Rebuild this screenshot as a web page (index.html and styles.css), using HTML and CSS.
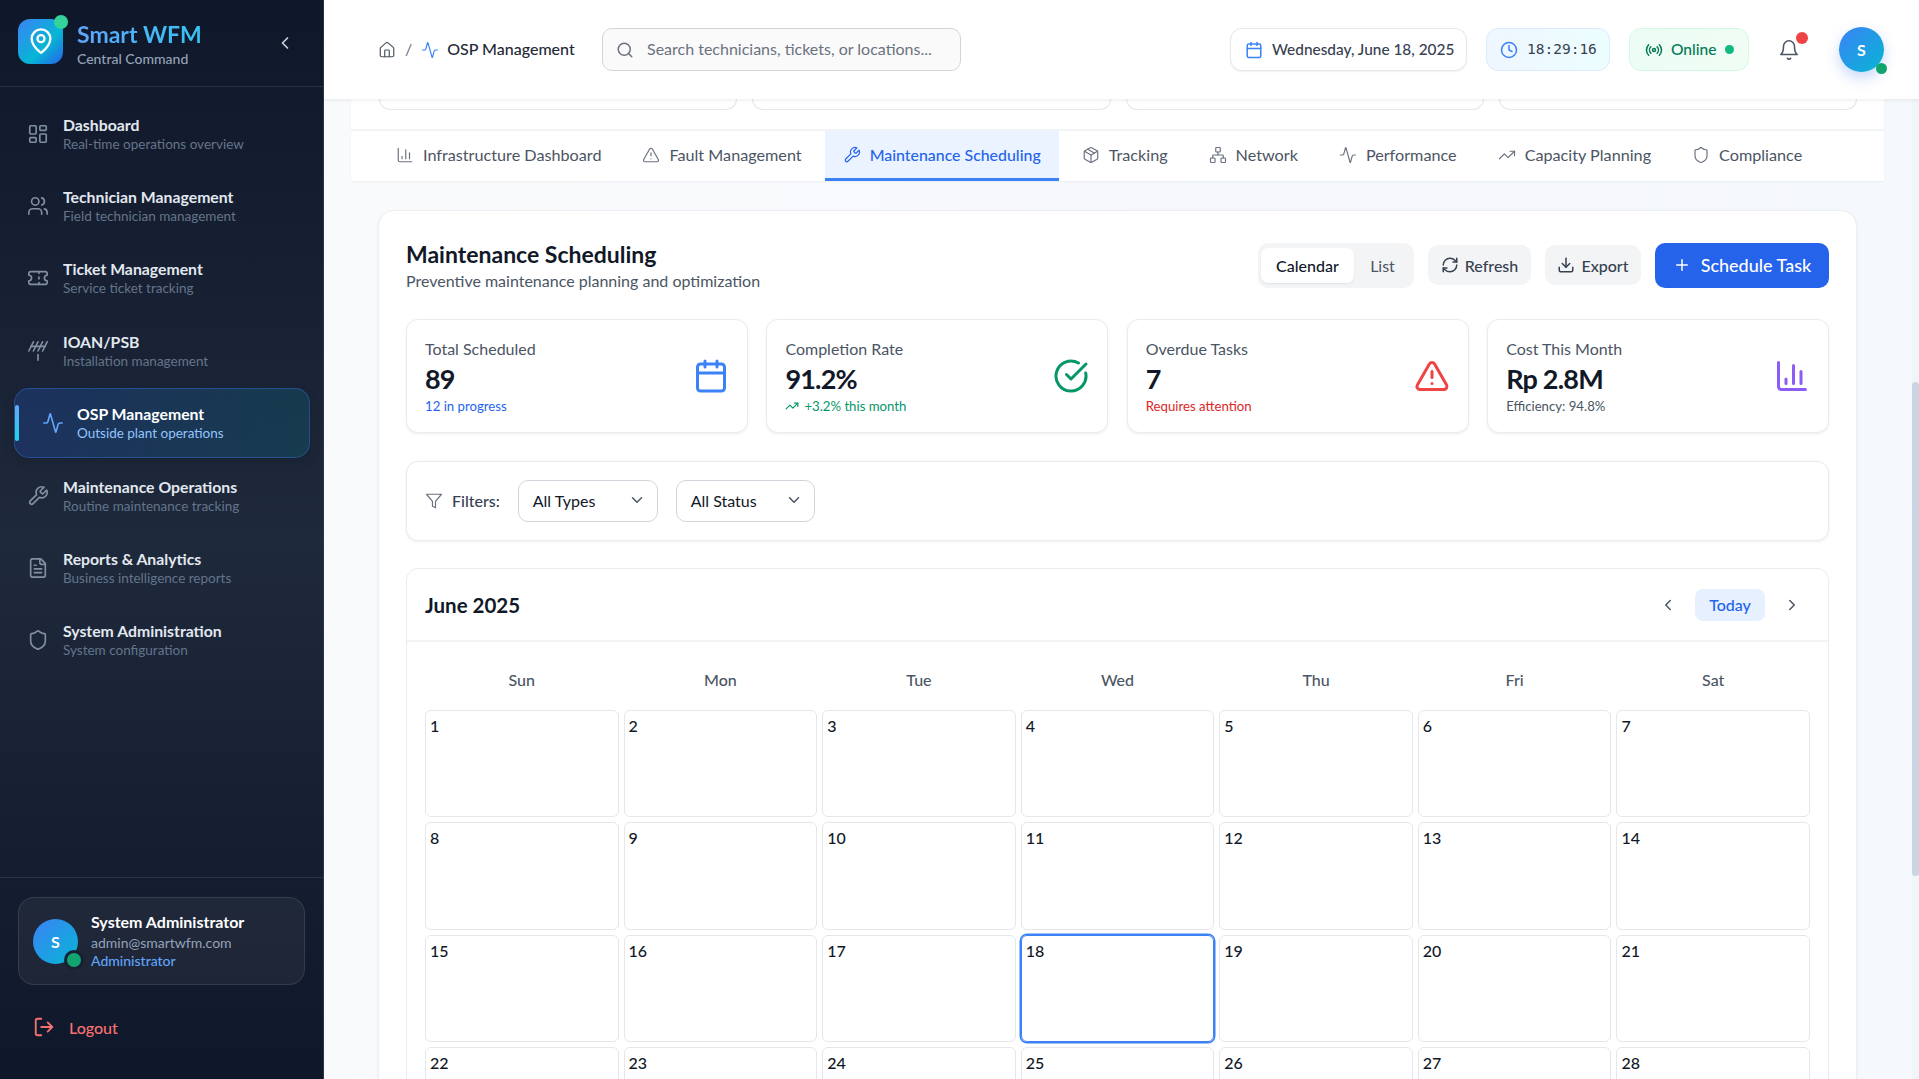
FILE: index.html
```html
<!DOCTYPE html>
<html lang="en">
<head>
    <meta charset="UTF-8">
    <meta name="viewport" content="width=device-width, initial-scale=1.0">
    <title>Smart WFM - OSP Management</title>
    <link rel="stylesheet" href="styles.css">
</head>
<body>
    <!-- icon sprite -->
    <svg class="sprite" xmlns="http://www.w3.org/2000/svg">
        <symbol id="i-pin" viewBox="0 0 24 24"><path d="M20 10c0 4.993-5.539 10.193-7.399 11.799a1 1 0 0 1-1.202 0C9.539 20.193 4 14.993 4 10a8 8 0 0 1 16 0"/><circle cx="12" cy="10" r="3"/></symbol>
        <symbol id="i-left" viewBox="0 0 24 24"><path d="m15 18-6-6 6-6"/></symbol>
        <symbol id="i-right" viewBox="0 0 24 24"><path d="m9 18 6-6-6-6"/></symbol>
        <symbol id="i-down" viewBox="0 0 24 24"><path d="m6 9 6 6 6-6"/></symbol>
        <symbol id="i-dash" viewBox="0 0 24 24"><rect x="3" y="3" width="7" height="9" rx="1"/><rect x="14" y="3" width="7" height="5" rx="1"/><rect x="14" y="12" width="7" height="9" rx="1"/><rect x="3" y="16" width="7" height="5" rx="1"/></symbol>
        <symbol id="i-users" viewBox="0 0 24 24"><path d="M16 21v-2a4 4 0 0 0-4-4H6a4 4 0 0 0-4 4v2"/><circle cx="9" cy="7" r="4"/><path d="M22 21v-2a4 4 0 0 0-3-3.87"/><path d="M16 3.13a4 4 0 0 1 0 7.75"/></symbol>
        <symbol id="i-ticket" viewBox="0 0 24 24"><path d="M2 9a3 3 0 0 1 0 6v2a2 2 0 0 0 2 2h16a2 2 0 0 0 2-2v-2a3 3 0 0 1 0-6V7a2 2 0 0 0-2-2H4a2 2 0 0 0-2 2Z"/><path d="M13 5v2"/><path d="M13 17v2"/><path d="M13 11v2"/></symbol>
        <symbol id="i-antenna" viewBox="0 0 24 24"><path d="M2 12 7 2"/><path d="m7 12 5-10"/><path d="m12 12 5-10"/><path d="m17 12 5-10"/><path d="M4.5 7h15"/><path d="M12 16v6"/></symbol>
        <symbol id="i-activity" viewBox="0 0 24 24"><path d="M22 12h-2.48a2 2 0 0 0-1.93 1.46l-2.35 8.36a.25.25 0 0 1-.48 0L9.24 2.18a.25.25 0 0 0-.48 0l-2.35 8.36A2 2 0 0 1 4.49 12H2"/></symbol>
        <symbol id="i-wrench" viewBox="0 0 24 24"><path d="M14.7 6.3a1 1 0 0 0 0 1.4l1.6 1.6a1 1 0 0 0 1.4 0l3.77-3.77a6 6 0 0 1-7.94 7.94l-6.91 6.91a2.12 2.12 0 0 1-3-3l6.91-6.91a6 6 0 0 1 7.94-7.94l-3.76 3.76z"/></symbol>
        <symbol id="i-file" viewBox="0 0 24 24"><path d="M15 2H6a2 2 0 0 0-2 2v16a2 2 0 0 0 2 2h12a2 2 0 0 0 2-2V7Z"/><path d="M14 2v4a2 2 0 0 0 2 2h4"/><path d="M10 9H8"/><path d="M16 13H8"/><path d="M16 17H8"/></symbol>
        <symbol id="i-shield" viewBox="0 0 24 24"><path d="M20 13c0 5-3.5 7.5-7.66 8.95a1 1 0 0 1-.67-.01C7.5 20.5 4 18 4 13V6a1 1 0 0 1 1-1c2 0 4.5-1.2 6.24-2.72a1.17 1.17 0 0 1 1.52 0C14.51 3.81 17 5 19 5a1 1 0 0 1 1 1z"/></symbol>
        <symbol id="i-logout" viewBox="0 0 24 24"><path d="M9 21H5a2 2 0 0 1-2-2V5a2 2 0 0 1 2-2h4"/><path d="m16 17 5-5-5-5"/><path d="M21 12H9"/></symbol>
        <symbol id="i-home" viewBox="0 0 24 24"><path d="M15 21v-8a1 1 0 0 0-1-1h-4a1 1 0 0 0-1 1v8"/><path d="M3 10a2 2 0 0 1 .709-1.528l7-5.999a2 2 0 0 1 2.582 0l7 5.999A2 2 0 0 1 21 10v9a2 2 0 0 1-2 2H5a2 2 0 0 1-2-2z"/></symbol>
        <symbol id="i-search" viewBox="0 0 24 24"><circle cx="11" cy="11" r="8"/><path d="m21 21-4.3-4.3"/></symbol>
        <symbol id="i-calendar" viewBox="0 0 24 24"><path d="M8 2v4"/><path d="M16 2v4"/><rect x="3" y="4" width="18" height="18" rx="2"/><path d="M3 10h18"/></symbol>
        <symbol id="i-clock" viewBox="0 0 24 24"><circle cx="12" cy="12" r="10"/><polyline points="12 6 12 12 16 14"/></symbol>
        <symbol id="i-radio" viewBox="0 0 24 24"><path d="M4.9 19.1C1 15.2 1 8.8 4.9 4.9"/><path d="M7.8 16.2c-2.3-2.3-2.3-6.1 0-8.5"/><circle cx="12" cy="12" r="2"/><path d="M16.2 7.8c2.3 2.3 2.3 6.1 0 8.5"/><path d="M19.1 4.9C23 8.8 23 15.1 19.1 19"/></symbol>
        <symbol id="i-bell" viewBox="0 0 24 24"><path d="M6 8a6 6 0 0 1 12 0c0 7 3 9 3 9H3s3-2 3-9"/><path d="M10.3 21a1.94 1.94 0 0 0 3.4 0"/></symbol>
        <symbol id="i-chart" viewBox="0 0 24 24"><path d="M3 3v16a2 2 0 0 0 2 2h16"/><path d="M18 17V9"/><path d="M13 17V5"/><path d="M8 17v-3"/></symbol>
        <symbol id="i-alert" viewBox="0 0 24 24"><path d="m21.73 18-8-14a2 2 0 0 0-3.48 0l-8 14A2 2 0 0 0 4 21h16a2 2 0 0 0 1.73-3"/><path d="M12 9v4"/><path d="M12 17h.01"/></symbol>
        <symbol id="i-package" viewBox="0 0 24 24"><path d="m7.5 4.27 9 5.15"/><path d="M21 8a2 2 0 0 0-1-1.73l-7-4a2 2 0 0 0-2 0l-7 4A2 2 0 0 0 3 8v8a2 2 0 0 0 1 1.73l7 4a2 2 0 0 0 2 0l7-4A2 2 0 0 0 21 16Z"/><path d="m3.3 7 8.7 5 8.7-5"/><path d="M12 22V12"/></symbol>
        <symbol id="i-network" viewBox="0 0 24 24"><rect x="16" y="16" width="6" height="6" rx="1"/><rect x="2" y="16" width="6" height="6" rx="1"/><rect x="9" y="2" width="6" height="6" rx="1"/><path d="M5 16v-3a1 1 0 0 1 1-1h12a1 1 0 0 1 1 1v3"/><path d="M12 12V8"/></symbol>
        <symbol id="i-trend" viewBox="0 0 24 24"><polyline points="22 7 13.5 15.5 8.5 10.5 2 17"/><polyline points="16 7 22 7 22 13"/></symbol>
        <symbol id="i-refresh" viewBox="0 0 24 24"><path d="M3 12a9 9 0 0 1 9-9 9.75 9.75 0 0 1 6.74 2.74L21 8"/><path d="M21 3v5h-5"/><path d="M21 12a9 9 0 0 1-9 9 9.75 9.75 0 0 1-6.74-2.74L3 16"/><path d="M8 16H3v5"/></symbol>
        <symbol id="i-download" viewBox="0 0 24 24"><path d="M21 15v4a2 2 0 0 1-2 2H5a2 2 0 0 1-2-2v-4"/><polyline points="7 10 12 15 17 10"/><line x1="12" y1="15" x2="12" y2="3"/></symbol>
        <symbol id="i-plus" viewBox="0 0 24 24"><path d="M5 12h14"/><path d="M12 5v14"/></symbol>
        <symbol id="i-check" viewBox="0 0 24 24"><path d="M21.801 10A10 10 0 1 1 17 3.335"/><path d="m9 11 3 3L22 4"/></symbol>
        <symbol id="i-filter" viewBox="0 0 24 24"><polygon points="22 3 2 3 10 12.46 10 19 14 21 14 12.46 22 3"/></symbol>
    </svg>

    <div class="app">
        <!-- sidebar -->
        <aside class="sidebar">
            <div class="brand">
                <div class="logo">
                    <svg class="icon"><use href="#i-pin"/></svg>
                    <span class="logo-dot"></span>
                </div>
                <div class="brand-text">
                    <div class="brand-name">Smart WFM</div>
                    <div class="brand-sub">Central Command</div>
                </div>
                <svg class="icon brand-toggle"><use href="#i-left"/></svg>
            </div>

            <nav class="nav">
                <a class="nav-item"><svg class="icon"><use href="#i-dash"/></svg><span><b>Dashboard</b><small>Real-time operations overview</small></span></a>
                <a class="nav-item"><svg class="icon"><use href="#i-users"/></svg><span><b>Technician Management</b><small>Field technician management</small></span></a>
                <a class="nav-item"><svg class="icon"><use href="#i-ticket"/></svg><span><b>Ticket Management</b><small>Service ticket tracking</small></span></a>
                <a class="nav-item"><svg class="icon"><use href="#i-antenna"/></svg><span><b>IOAN/PSB</b><small>Installation management</small></span></a>
                <a class="nav-item active"><svg class="icon"><use href="#i-activity"/></svg><span><b>OSP Management</b><small>Outside plant operations</small></span></a>
                <a class="nav-item"><svg class="icon"><use href="#i-wrench"/></svg><span><b>Maintenance Operations</b><small>Routine maintenance tracking</small></span></a>
                <a class="nav-item"><svg class="icon"><use href="#i-file"/></svg><span><b>Reports &amp; Analytics</b><small>Business intelligence reports</small></span></a>
                <a class="nav-item"><svg class="icon"><use href="#i-shield"/></svg><span><b>System Administration</b><small>System configuration</small></span></a>
            </nav>

            <div class="side-footer">
                <div class="user-card">
                    <div class="avatar">S<span class="user-dot"></span></div>
                    <div class="user-text">
                        <div class="user-name">System Administrator</div>
                        <div class="user-mail">admin@smartwfm.com</div>
                        <div class="user-role">Administrator</div>
                    </div>
                </div>
                <a class="logout"><svg class="icon"><use href="#i-logout"/></svg>Logout</a>
            </div>
        </aside>

        <main class="main">
            <!-- top bar -->
            <header class="topbar">
                <div class="crumbs">
                    <svg class="icon crumb-home"><use href="#i-home"/></svg>
                    <span class="crumb-sep">/</span>
                    <svg class="icon crumb-page"><use href="#i-activity"/></svg>
                    <span class="crumb-name">OSP Management</span>
                </div>
                <div class="search">
                    <svg class="icon"><use href="#i-search"/></svg>
                    <span>Search technicians, tickets, or locations...</span>
                </div>
                <div class="top-right">
                    <div class="pill pill-date"><svg class="icon"><use href="#i-calendar"/></svg><span>Wednesday, June 18, 2025</span></div>
                    <div class="pill pill-time"><svg class="icon"><use href="#i-clock"/></svg><span>18:29:16</span></div>
                    <div class="pill pill-online"><svg class="icon"><use href="#i-radio"/></svg><span>Online</span><span class="online-dot"></span></div>
                    <div class="bell"><svg class="icon"><use href="#i-bell"/></svg><span class="bell-dot"></span></div>
                    <div class="avatar avatar-top">S<span class="top-dot"></span></div>
                </div>
            </header>

            <div class="content">
                <div class="panel">
                    <div class="stubs"><div></div><div></div><div></div><div></div></div>
                    <div class="tabs">
                        <a class="tab"><svg class="icon"><use href="#i-chart"/></svg>Infrastructure Dashboard</a>
                        <a class="tab"><svg class="icon"><use href="#i-alert"/></svg>Fault Management</a>
                        <a class="tab active"><svg class="icon"><use href="#i-wrench"/></svg>Maintenance Scheduling</a>
                        <a class="tab"><svg class="icon"><use href="#i-package"/></svg>Tracking</a>
                        <a class="tab"><svg class="icon"><use href="#i-network"/></svg>Network</a>
                        <a class="tab"><svg class="icon"><use href="#i-activity"/></svg>Performance</a>
                        <a class="tab"><svg class="icon"><use href="#i-trend"/></svg>Capacity Planning</a>
                        <a class="tab"><svg class="icon"><use href="#i-shield"/></svg>Compliance</a>
                    </div>
                </div>

                <section class="card">
                    <div class="card-head">
                        <div class="card-title">
                            <h1>Maintenance Scheduling</h1>
                            <p>Preventive maintenance planning and optimization</p>
                        </div>
                        <div class="actions">
                            <div class="toggle"><button class="on">Calendar</button><button>List</button></div>
                            <button class="btn btn-refresh"><svg class="icon"><use href="#i-refresh"/></svg>Refresh</button>
                            <button class="btn btn-export"><svg class="icon"><use href="#i-download"/></svg>Export</button>
                            <button class="btn-main"><svg class="icon"><use href="#i-plus"/></svg>Schedule Task</button>
                        </div>
                    </div>

                    <div class="stats">
                        <div class="stat">
                            <div>
                                <div class="stat-label">Total Scheduled</div>
                                <div class="stat-value">89</div>
                                <div class="stat-note blue">12 in progress</div>
                            </div>
                            <svg class="icon stat-icon blue"><use href="#i-calendar"/></svg>
                        </div>
                        <div class="stat">
                            <div>
                                <div class="stat-label">Completion Rate</div>
                                <div class="stat-value">91.2%</div>
                                <div class="stat-note green"><svg class="icon"><use href="#i-trend"/></svg>+3.2% this month</div>
                            </div>
                            <svg class="icon stat-icon green"><use href="#i-check"/></svg>
                        </div>
                        <div class="stat">
                            <div>
                                <div class="stat-label">Overdue Tasks</div>
                                <div class="stat-value">7</div>
                                <div class="stat-note red">Requires attention</div>
                            </div>
                            <svg class="icon stat-icon red"><use href="#i-alert"/></svg>
                        </div>
                        <div class="stat">
                            <div>
                                <div class="stat-label">Cost This Month</div>
                                <div class="stat-value">Rp 2.8M</div>
                                <div class="stat-note">Efficiency: 94.8%</div>
                            </div>
                            <svg class="icon stat-icon purple"><use href="#i-chart"/></svg>
                        </div>
                    </div>

                    <div class="filters">
                        <svg class="icon"><use href="#i-filter"/></svg>
                        <span class="filters-label">Filters:</span>
                        <div class="select select-type"><span>All Types</span><svg class="icon"><use href="#i-down"/></svg></div>
                        <div class="select select-status"><span>All Status</span><svg class="icon"><use href="#i-down"/></svg></div>
                    </div>

                    <div class="calendar">
                        <div class="cal-head">
                            <h2>June 2025</h2>
                            <div class="cal-nav">
                                <svg class="icon"><use href="#i-left"/></svg>
                                <button>Today</button>
                                <svg class="icon"><use href="#i-right"/></svg>
                            </div>
                        </div>
                        <div class="cal-body">
                            <div class="cal-days">
                                <div>Sun</div><div>Mon</div><div>Tue</div><div>Wed</div><div>Thu</div><div>Fri</div><div>Sat</div>
                            </div>
                            <div class="cal-grid">
                                <div class="day">1</div><div class="day">2</div><div class="day">3</div><div class="day">4</div><div class="day">5</div><div class="day">6</div><div class="day">7</div>
                                <div class="day">8</div><div class="day">9</div><div class="day">10</div><div class="day">11</div><div class="day">12</div><div class="day">13</div><div class="day">14</div>
                                <div class="day">15</div><div class="day">16</div><div class="day">17</div><div class="day today">18</div><div class="day">19</div><div class="day">20</div><div class="day">21</div>
                                <div class="day">22</div><div class="day">23</div><div class="day">24</div><div class="day">25</div><div class="day">26</div><div class="day">27</div><div class="day">28</div>
                            </div>
                        </div>
                    </div>
                </section>
            </div>

            <!-- scrollbar -->
            <div class="scroll-track"><div class="scroll-thumb"></div></div>
        </main>
    </div>
</body>
</html>
```

FILE: styles.css
```css
* {
    box-sizing: border-box;
}
html, body {
    margin: 0;
    height: 100%;
}
body {
    font-family: "Lato", "Noto Sans", sans-serif;
    font-size: 16px;
    color: #111827;
    overflow: hidden;
    background: #f8fafc;
}
button {
    font: inherit;
    border: 0;
    background: none;
}
h1, h2, p {
    margin: 0;
}
.sprite {
    position: absolute;
    width: 0;
    height: 0;
}
.icon {
    width: 18px;
    height: 18px;
    flex: none;
    fill: none;
    stroke: currentColor;
    stroke-width: 2;
    stroke-linecap: round;
    stroke-linejoin: round;
}
.app {
    display: flex;
    height: 100vh;
    overflow: hidden;
}

/* sidebar */
.sidebar {
    width: 324px;
    flex: none;
    display: flex;
    flex-direction: column;
    background: linear-gradient(180deg, #0f172a 0%, #1e293b 50%, #0f172a 100%);
    border-right: 1px solid #2b3648;
    color: #e2e8f0;
}
.brand {
    height: 87px;
    display: flex;
    align-items: center;
    gap: 14px;
    padding: 0 28px 0 18px;
    border-bottom: 1px solid rgba(255, 255, 255, 0.1);
}
.logo {
    position: relative;
    width: 45px;
    height: 45px;
    margin-bottom: 3px;
    border-radius: 12px;
    display: flex;
    align-items: center;
    justify-content: center;
    color: #fff;
    background: linear-gradient(135deg, #3b82f6, #06b6d4 60%, #2563eb);
}
.logo .icon {
    width: 28px;
    height: 28px;
    margin-top: -1px;
}
.logo-dot {
    position: absolute;
    top: -4px;
    right: -5px;
    width: 14px;
    height: 14px;
    border-radius: 50%;
    background: #34d399;
}
.brand-text {
    flex: 1;
    padding-top: 2px;
}
.brand-name {
    font-size: 23px;
    line-height: 30px;
    font-weight: 700;
    background: linear-gradient(90deg, #60a5fa, #22d3ee);
    -webkit-background-clip: text;
    background-clip: text;
    color: transparent;
}
.brand-sub {
    font-size: 14px;
    line-height: 20px;
    color: #94a3b8;
    font-weight: 500;
}
.brand-toggle {
    color: #cbd5e1;
    width: 20px;
    height: 20px;
}
.nav {
    flex: 1;
    display: flex;
    flex-direction: column;
    gap: 2.2px;
    padding: 12px 13px 0 14px;
}
.nav-item {
    position: relative;
    height: 70px;
    display: flex;
    align-items: center;
    gap: 14px;
    padding: 1px 0 0 13px;
    border-radius: 15px;
    color: #94a3b8;
}
.nav-item .icon {
    width: 22px;
    height: 22px;
    margin-top: -1px;
    stroke-width: 1.8;
    opacity: 0.85;
}
.nav-item b, .nav-item small {
    display: block;
    white-space: nowrap;
}
.nav-item b {
    font-size: 15.8px;
    line-height: 19px;
    font-weight: 700;
    color: #e2e8f0;
}
.nav-item small {
    font-size: 13.5px;
    line-height: 20px;
    color: #64748b;
}
.nav-item.active {
    margin: 0.5px 0;
    gap: 13px;
    padding-left: 27px;
    border: 1px solid rgba(59, 130, 246, 0.35);
    background: linear-gradient(90deg, rgba(37, 99, 235, 0.22), rgba(6, 182, 212, 0.15));
    box-shadow: 0 4px 12px rgba(0, 0, 0, 0.12);
}
.nav-item.active::before {
    content: "";
    position: absolute;
    left: 0;
    top: 16px;
    bottom: 16px;
    width: 4px;
    border-radius: 2px;
    background: linear-gradient(180deg, #60a5fa, #22d3ee);
}
.nav-item.active .icon {
    color: #60a5fa;
    opacity: 1;
}
.nav-item.active b {
    color: #fff;
}
.nav-item.active small {
    color: #93c5fd;
}
.side-footer {
    height: 202px;
    padding: 19px 18px 0;
    border-top: 1px solid rgba(255, 255, 255, 0.1);
}
.user-card {
    height: 88px;
    display: flex;
    align-items: center;
    gap: 13px;
    padding: 0 14px;
    border: 1px solid rgba(255, 255, 255, 0.1);
    border-radius: 16px;
    background: rgba(255, 255, 255, 0.05);
}
.avatar {
    position: relative;
    width: 45px;
    height: 45px;
    flex: none;
    border-radius: 50%;
    display: flex;
    align-items: center;
    justify-content: center;
    color: #fff;
    font-weight: 700;
    background: linear-gradient(135deg, #3b82f6, #06b6d4);
}
.user-text {
    margin-top: -2px;
}
.user-dot {
    position: absolute;
    right: -6px;
    bottom: -6px;
    width: 20px;
    height: 20px;
    border-radius: 50%;
    background: #10a56f;
    border: 3px solid #172133;
}
.user-name {
    font-size: 16px;
    line-height: 22px;
    font-weight: 700;
    color: #fff;
}
.user-mail {
    font-size: 14px;
    line-height: 19px;
    color: #94a3b8;
}
.user-role {
    font-size: 14px;
    line-height: 18px;
    font-weight: 500;
    color: #60a5fa;
}
.logout {
    display: flex;
    align-items: center;
    gap: 14px;
    margin: 30px 0 0 15px;
    height: 24px;
    color: #f87171;
    font-weight: 500;
}
.logout .icon {
    width: 22px;
    height: 22px;
}

/* top bar */
.main {
    position: relative;
    flex: 1;
    min-width: 0;
    display: flex;
    flex-direction: column;
}
.topbar {
    position: relative;
    z-index: 2;
    height: 99px;
    flex: none;
    display: flex;
    align-items: center;
    padding: 0 35px 0 54px;
    background: #fff;
    box-shadow: 0 1px 4px rgba(0, 0, 0, 0.08);
}
.crumbs {
    display: flex;
    align-items: center;
    gap: 9px;
    width: 224px;
}
.crumb-home {
    color: #4b5563;
    stroke-width: 1.6;
}
.crumb-sep {
    color: #6b7280;
    margin-top: -2px;
}
.crumb-page {
    color: #3b82f6;
    stroke-width: 1.6;
    margin-right: -1px;
}
.crumb-name {
    font-weight: 500;
    color: #1f2937;
    margin-top: -2px;
}
.search {
    width: 359px;
    height: 43px;
    display: flex;
    align-items: center;
    gap: 13px;
    padding: 0 13px;
    border: 1px solid #d1d5db;
    border-radius: 10px;
    background: #fafafa;
    color: #6b7280;
}
.search span {
    margin-top: -2px;
}
.top-right {
    margin-left: auto;
    display: flex;
    align-items: center;
    gap: 19px;
}
.pill {
    height: 43px;
    display: flex;
    align-items: center;
    gap: 9px;
    padding: 0 14px 0 15px;
    border: 1px solid #e5e7eb;
    border-radius: 12px;
    white-space: nowrap;
}
.pill span {
    margin-top: -2px;
}
.pill-date {
    width: 237px;
    padding-left: 14px;
    font-size: 15.4px;
    font-weight: 500;
    color: #374151;
    background: #fff;
    box-shadow: 0 1px 2px rgba(0, 0, 0, 0.06);
}
.pill-date .icon {
    color: #3b82f6;
}
.pill-time {
    width: 124px;
    padding-left: 13px;
    border-color: #dbeafe;
    background: linear-gradient(90deg, #eff6ff, #ecfeff);
    font-family: "DejaVu Sans Mono", monospace;
    font-size: 14.5px;
    color: #374151;
}
.pill-time .icon {
    color: #3b82f6;
}
.pill-online {
    width: 120px;
    gap: 8px;
    border-color: #d1fae5;
    background: linear-gradient(90deg, #ecfdf5, #f0fdf4);
    color: #047857;
    font-size: 15.6px;
    font-weight: 500;
}
.pill .online-dot {
    width: 9px;
    height: 9px;
    flex: none;
    margin: 0 0 0 auto;
    border-radius: 50%;
    background: #10b981;
}
.bell {
    position: relative;
    width: 40px;
    height: 40px;
    margin-left: 1px;
    display: flex;
    align-items: center;
    justify-content: center;
    color: #4b5563;
}
.bell .icon {
    width: 22px;
    height: 22px;
    stroke-width: 1.7;
}
.bell-dot {
    position: absolute;
    top: 2px;
    right: 1px;
    width: 12px;
    height: 12px;
    border-radius: 50%;
    background: #ef4444;
}
.avatar-top {
    margin-left: 11px;
    box-shadow: 0 6px 14px rgba(37, 99, 235, 0.25);
}
.top-dot {
    position: absolute;
    right: -3px;
    bottom: -2px;
    width: 11px;
    height: 11px;
    border-radius: 50%;
    background: #10a56f;
}

/* content */
.content {
    flex: 1;
    min-height: 0;
    overflow: hidden;
    padding: 0 35px 0 27px;
    background: linear-gradient(90deg, #f8fafc, #f5f8fc);
}
.panel {
    background: #fff;
    box-shadow: 0 1px 2px rgba(0, 0, 0, 0.05);
}
.stubs {
    display: grid;
    grid-template-columns: repeat(4, 1fr);
    gap: 15px;
    height: 30px;
    padding: 0 27px 19px 28px;
}
.stubs div {
    border: 1px solid #e5e7eb;
    border-top: 0;
    border-radius: 0 0 12px 12px;
}
.tabs {
    display: flex;
    gap: 5px;
    height: 52px;
    padding-left: 27px;
    border-top: 2px solid #f1f3f5;
}
.tab {
    display: flex;
    align-items: center;
    gap: 9px;
    padding: 0 18px;
    font-size: 16.2px;
    color: #4b5563;
    white-space: nowrap;
    border-bottom: 3px solid transparent;
}
.tab .icon {
    stroke-width: 1.6;
    color: #6b7280;
}
.tab.active {
    color: #2563eb;
    font-size: 15.9px;
    font-weight: 500;
    background: #eaf3ff;
    border-bottom-color: #3b82f6;
}
.tab.active .icon {
    color: #2563eb;
}
.card {
    margin: 29px 27px 0;
    padding: 27px;
    height: 1000px;
    border: 1px solid #eceef1;
    border-radius: 16px;
    background: #fff;
    box-shadow: 0 1px 3px rgba(0, 0, 0, 0.06);
}
.card-head {
    display: flex;
    align-items: center;
    justify-content: space-between;
    height: 54px;
    margin-bottom: 27px;
}
.card-title {
    padding-top: 2px;
}
h1 {
    font-size: 23px;
    line-height: 30px;
    font-weight: 700;
}
.card-head p {
    line-height: 24px;
    color: #4b5563;
}
.actions {
    display: flex;
    align-items: center;
    gap: 14px;
}
.toggle {
    width: 156px;
    height: 45px;
    display: flex;
    align-items: center;
    padding: 0 3px;
    border-radius: 10px;
    background: #f3f4f6;
}
.toggle button {
    flex: 1;
    height: 35px;
    color: #4b5563;
}
.toggle .on {
    flex: none;
    width: 93px;
    border-radius: 7px;
    font-weight: 500;
    color: #111827;
    background: #fff;
    box-shadow: 0 1px 2px rgba(0, 0, 0, 0.08);
}
.btn {
    height: 40px;
    display: flex;
    align-items: center;
    justify-content: center;
    gap: 6px;
    border-radius: 10px;
    color: #374151;
    font-weight: 500;
    background: #f3f4f6;
}
.btn-refresh {
    width: 103px;
}
.btn-export {
    width: 96px;
}
.btn-main {
    width: 174px;
    height: 45px;
    display: flex;
    align-items: center;
    justify-content: center;
    gap: 10px;
    border-radius: 10px;
    color: #fff;
    font-size: 18px;
    font-weight: 500;
    background: #2563eb;
}
.stats {
    display: grid;
    grid-template-columns: repeat(4, 1fr);
    gap: 18.5px;
    margin-bottom: 28px;
}
.stat {
    height: 114px;
    display: flex;
    align-items: center;
    justify-content: space-between;
    padding: 0 18px;
    border: 1px solid #e9ebee;
    border-radius: 12px;
    background: #fff;
    box-shadow: 0 1px 3px rgba(0, 0, 0, 0.07);
}
.stat-label {
    font-size: 16px;
    line-height: 22px;
    padding-top: 2px;
    color: #4b5563;
}
.stat-value {
    font-size: 27px;
    line-height: 36px;
    padding-top: 1px;
    font-weight: 700;
    letter-spacing: -0.8px;
    color: #111827;
}
.stat-note {
    display: flex;
    align-items: center;
    gap: 5px;
    margin-top: -1px;
    font-size: 13.2px;
    line-height: 20px;
    color: #4b5563;
}
.stat-note .icon {
    width: 14px;
    height: 14px;
}
.stat-icon {
    width: 36px;
    height: 36px;
}
.blue {
    color: #2563eb;
}
.stat-icon.blue {
    color: #3b82f6;
}
.green {
    color: #059669;
}
.red {
    color: #dc2626;
}
.stat-icon.red {
    color: #ef4444;
}
.purple {
    color: #8b5cf6;
}
.filters {
    height: 80px;
    display: flex;
    align-items: center;
    padding: 0 18px;
    margin-bottom: 27px;
    border: 1px solid #e9ebee;
    border-radius: 12px;
    background: #fff;
    box-shadow: 0 1px 3px rgba(0, 0, 0, 0.07);
}
.filters > .icon {
    color: #6b7280;
    stroke-width: 1.6;
}
.filters-label {
    margin: -2px 18px 0 9px;
    font-weight: 500;
    color: #374151;
}
.select {
    height: 42px;
    display: flex;
    align-items: center;
    justify-content: space-between;
    padding: 0 11px 0 14px;
    margin-right: 18px;
    border: 1px solid #d1d5db;
    border-radius: 10px;
    color: #111827;
    background: #fff;
}
.select span {
    margin-top: -2px;
}
.select .icon {
    color: #4b5563;
    margin-top: -2px;
}
.select-type {
    width: 140px;
}
.select-status {
    width: 139px;
}
.calendar {
    border: 1px solid #e9ebee;
    border-radius: 12px;
    background: #fff;
}
.cal-head {
    height: 73px;
    display: flex;
    align-items: center;
    justify-content: space-between;
    padding: 0 18px;
    border-bottom: 2px solid #f1f3f5;
}
h2 {
    font-size: 20.5px;
    font-weight: 700;
}
.cal-nav {
    display: flex;
    align-items: center;
    gap: 18px;
    padding-right: 9px;
    color: #4b5563;
}
.cal-nav button {
    width: 70px;
    height: 32px;
    border-radius: 8px;
    color: #2563eb;
    font-weight: 500;
    background: #e6f0fe;
}
.cal-body {
    padding: 17px 18px 0;
}
.cal-days {
    display: grid;
    grid-template-columns: repeat(7, 1fr);
    gap: 5px;
    height: 42px;
    margin-bottom: 9px;
    text-align: center;
    line-height: 42px;
    font-weight: 500;
    color: #4b5563;
}
.cal-grid {
    display: grid;
    grid-template-columns: repeat(7, 1fr);
    grid-auto-rows: 107.3px;
    gap: 5px;
}
.day {
    padding: 5px 4px;
    border: 1px solid #e5e7eb;
    border-radius: 6px;
    font-weight: 500;
    color: #111827;
}
.day.today {
    border-color: #3b82f6;
    box-shadow: 0 0 0 1.5px #3b82f6;
}

/* scrollbar */
.scroll-track {
    position: absolute;
    top: 99px;
    right: 0;
    bottom: 0;
    width: 7px;
    background: #f1f5f9;
}
.scroll-thumb {
    margin-top: 283px;
    height: 494px;
    border-radius: 4px;
    background: #cbd5e1;
}
```
